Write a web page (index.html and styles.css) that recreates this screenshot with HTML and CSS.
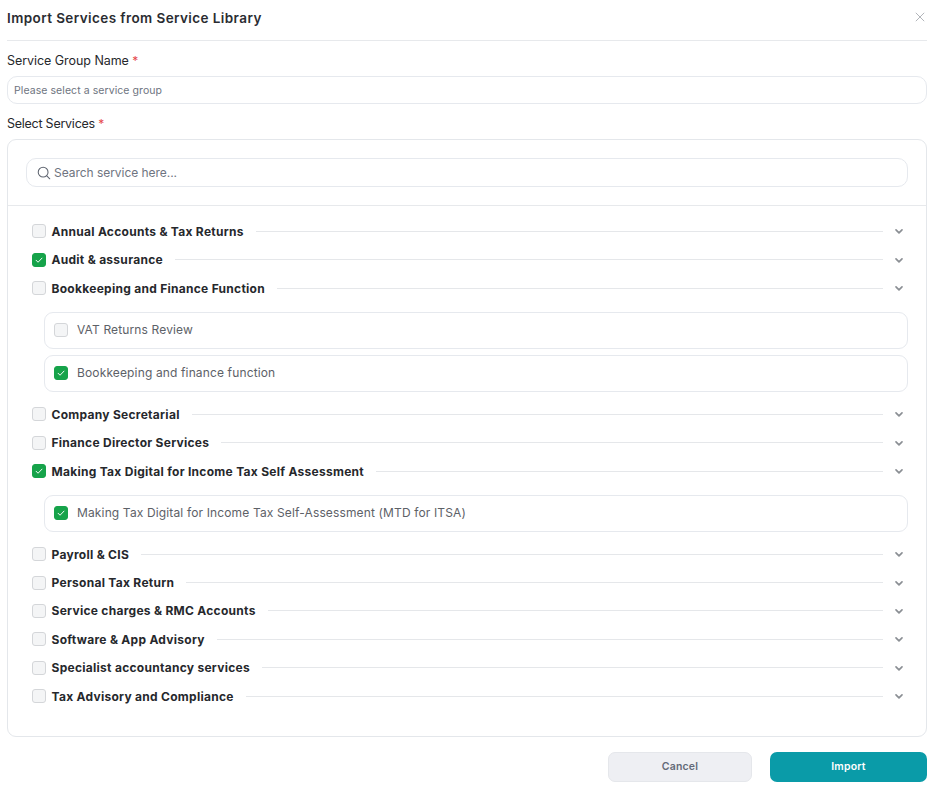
FILE: index.html
```html
<!DOCTYPE html>
<html lang="en">
<head>
<meta charset="utf-8">
<title>Import Services</title>
<link rel="stylesheet" href="styles.css">
</head>
<body>
<svg class="sprite" width="0" height="0" aria-hidden="true">
  <symbol id="chev" viewBox="0 0 10 10"><path d="M2 3.9 5 6.8 8 3.9" fill="none" stroke="currentColor" stroke-width="1.7" stroke-linecap="round" stroke-linejoin="round"/></symbol>
  <symbol id="tick" viewBox="0 0 14 14"><path d="M3.6 7.3 5.9 9.6 10.5 4.8" fill="none" stroke="currentColor" stroke-width="1.1" stroke-linecap="round" stroke-linejoin="round"/></symbol>
</svg>
<main class="modal">
  <header class="head">
    <h1 class="title">Import Services from Service Library</h1>
    <svg class="close" viewBox="0 0 10 10" aria-hidden="true"><path d="M.8.8l8.4 8.4M9.2.8.8 9.2" fill="none" stroke="currentColor" stroke-width=".9"/></svg>
  </header>
  <label class="label first">Service Group Name <span class="req">*</span></label>
  <div class="select">Please select a service group</div>
  <label class="label second">Select Services <span class="req">*</span></label>
  <section class="panel">
    <div class="searchwrap">
      <div class="search">
        <svg class="mag" viewBox="0 0 16 16" aria-hidden="true"><circle cx="7" cy="7" r="5.6" fill="none" stroke="currentColor" stroke-width="1.2"/><path d="M11.2 11.2 14.6 14.6" stroke="currentColor" stroke-width="1.2" stroke-linecap="round"/></svg>
        <span>Search service here...</span>
      </div>
    </div>
    <div class="list">
      <div class="row"><span class="cb"></span><span class="name">Annual Accounts &amp; Tax Returns</span><span class="rule"></span><svg class="chev"><use href="#chev"/></svg></div>
      <div class="row"><span class="cb on"><svg><use href="#tick"/></svg></span><span class="name">Audit &amp; assurance</span><span class="rule"></span><svg class="chev"><use href="#chev"/></svg></div>
      <div class="row"><span class="cb"></span><span class="name">Bookkeeping and Finance Function</span><span class="rule"></span><svg class="chev"><use href="#chev"/></svg></div>
      <div class="subs">
        <div class="sub"><span class="cb"></span><span>VAT Returns Review</span></div>
        <div class="sub"><span class="cb on"><svg><use href="#tick"/></svg></span><span>Bookkeeping and finance function</span></div>
      </div>
      <div class="row"><span class="cb"></span><span class="name">Company Secretarial</span><span class="rule"></span><svg class="chev"><use href="#chev"/></svg></div>
      <div class="row"><span class="cb"></span><span class="name">Finance Director Services</span><span class="rule"></span><svg class="chev"><use href="#chev"/></svg></div>
      <div class="row"><span class="cb on"><svg><use href="#tick"/></svg></span><span class="name">Making Tax Digital for Income Tax Self Assessment</span><span class="rule"></span><svg class="chev"><use href="#chev"/></svg></div>
      <div class="subs">
        <div class="sub"><span class="cb on"><svg><use href="#tick"/></svg></span><span>Making Tax Digital for Income Tax Self-Assessment (MTD for ITSA)</span></div>
      </div>
      <div class="row"><span class="cb"></span><span class="name">Payroll &amp; CIS</span><span class="rule"></span><svg class="chev"><use href="#chev"/></svg></div>
      <div class="row"><span class="cb"></span><span class="name">Personal Tax Return</span><span class="rule"></span><svg class="chev"><use href="#chev"/></svg></div>
      <div class="row"><span class="cb"></span><span class="name">Service charges &amp; RMC Accounts</span><span class="rule"></span><svg class="chev"><use href="#chev"/></svg></div>
      <div class="row"><span class="cb"></span><span class="name">Software &amp; App Advisory</span><span class="rule"></span><svg class="chev"><use href="#chev"/></svg></div>
      <div class="row"><span class="cb"></span><span class="name">Specialist accountancy services</span><span class="rule"></span><svg class="chev"><use href="#chev"/></svg></div>
      <div class="row"><span class="cb"></span><span class="name">Tax Advisory and Compliance</span><span class="rule"></span><svg class="chev"><use href="#chev"/></svg></div>
    </div>
  </section>
  <footer class="foot">
    <button class="btn cancel" type="button">Cancel</button>
    <button class="btn import" type="button">Import</button>
  </footer>
</main>
</body>
</html>
```
FILE: styles.css
```css
* { box-sizing: border-box; }
html, body { margin: 0; background: #fff; }
body { font-family: "Inter", "Noto Sans", sans-serif; color: #24262b; height: 799px; overflow: hidden; }
.sprite { position: absolute; }
.modal { padding: 0 15px 0 7px; display: flex; flex-direction: column; }
.head { height: 41px; display: flex; align-items: center; justify-content: space-between; border-bottom: 1px solid #e7e9ec; padding-bottom: 5px; }
.title { margin: 0; font-size: 13.5px; font-weight: 600; letter-spacing: .41px; color: #2a2c31; }
.close { width: 10px; height: 10px; color: #a9adb2; margin-right: 2px; margin-top: -1px; }
.label { display: block; font-size: 12.5px; line-height: 18px; letter-spacing: -.05px; color: #26282c; }
.label.first { margin-top: 11px; }
.label.second { margin-top: 11px; letter-spacing: -.25px; }
.req { color: #e5484d; font-size: 12px; }
.select { margin-top: 6px; height: 28px; border: 1px solid #e6e9ee; border-radius: 10px; padding-left: 6px; display: flex; align-items: center; font-size: 10.5px; letter-spacing: .07px; color: #6e7480; }
.panel { margin-top: 6px; height: 598px; border: 1px solid #e4e7eb; border-radius: 9px; display: flex; flex-direction: column; }
.searchwrap { padding: 18px 18px 18px; border-bottom: 1px solid #e7e9ec; }
.search { height: 29px; border: 1px solid #e6e9ee; border-radius: 10px; display: flex; align-items: center; gap: 3px; padding-left: 10px; font-size: 12px; letter-spacing: -.04px; color: #6e7480; }
.mag { width: 14px; height: 14px; color: #5f6570; flex: none; }
.list { padding: 11.3px 18px 0 24px; display: flex; flex-direction: column; }
.row { height: 28.4px; display: flex; align-items: center; }
.cb { width: 14px; height: 14px; flex: none; border: 1px solid #d4d6d9; border-radius: 3px; background: #f4f5f6; display: block; }
.cb.on { background: #16a34a; border-color: #16a34a; color: #fff; }
.cb svg { display: block; width: 12px; height: 12px; }
.name { margin-left: 5.5px; font-size: 12px; font-weight: 700; letter-spacing: .28px; color: #26282c; white-space: nowrap; }
.rule { flex: 1; height: 1px; background: #e5e7ea; margin-left: 12px; margin-right: 11px; }
.chev { width: 10px; height: 10px; color: #8b8f94; flex: none; margin-right: 4.5px; }
.subs { padding: 9.5px 0 8.2px 12px; display: flex; flex-direction: column; gap: 6px; }
.sub { height: 37px; border: 1px solid #e6e9ee; border-radius: 9px; display: flex; align-items: center; gap: 9px; padding: 0 0 1px 9px; font-size: 12px; letter-spacing: .14px; color: #5d6167; }
.foot { margin-top: 15px; display: flex; justify-content: flex-end; gap: 18px; }
.btn { height: 30px; border: 0; border-radius: 7px; padding: 0 0 2px; font-family: inherit; font-size: 10.5px; font-weight: 600; letter-spacing: .2px; }
.cancel { width: 144px; background: #eeeff3; border: 1px solid #e5e7eb; color: #636a78; }
.import { width: 157px; background: #0a9ba8; color: #fff; }
```
